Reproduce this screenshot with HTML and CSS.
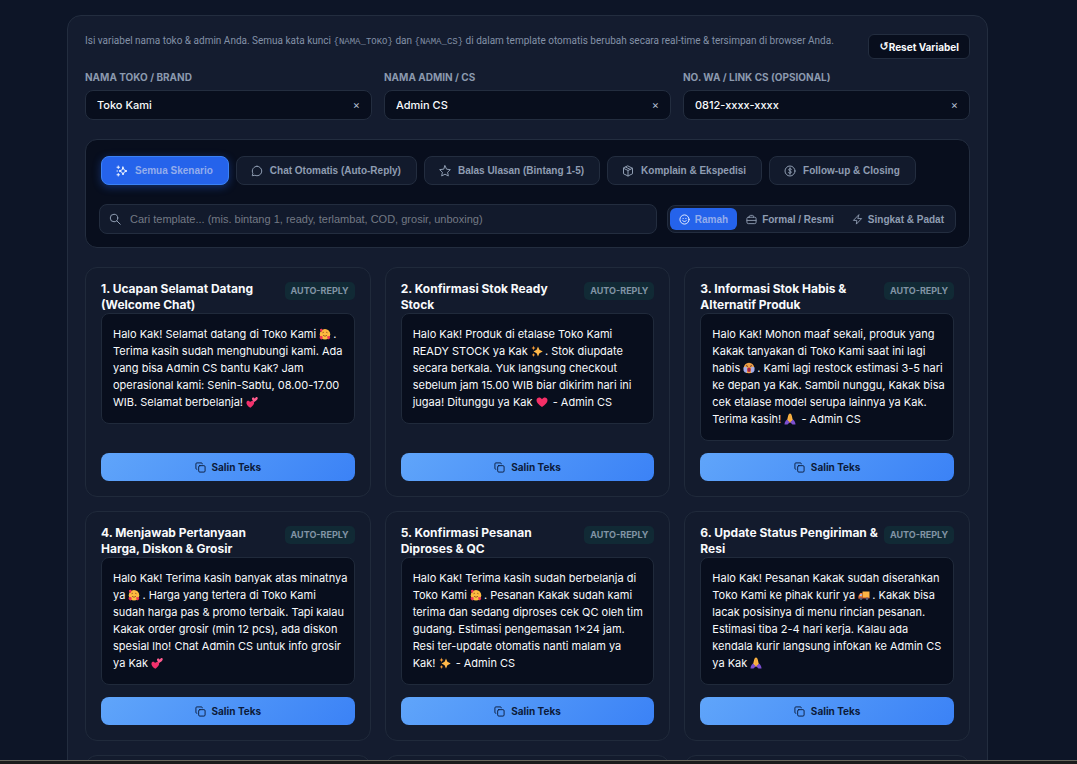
FILE: index.html
```html
<!DOCTYPE html>
<html lang="id">
<head>
<meta charset="utf-8">
<meta name="viewport" content="width=device-width, initial-scale=1">
<title>Template Chat Toko</title>
<link rel="stylesheet" href="styles.css">
</head>
<body>
<svg class="sprite" aria-hidden="true">
  <symbol id="i-spark" viewBox="0 0 24 24"><path d="M14 4l2.200 5.800L22 12l-5.800 2.200L14 20l-2.200-5.800L6 12l5.800-2.200z"/><path d="M4.500 2v5M2 4.500h5M4.500 17v5M2 19.500h5M2 12h1"/></symbol>
  <symbol id="i-chat" viewBox="0 0 24 24"><path d="M12 2.500a9.500 9.500 0 1 1-4.200 18L2.500 21.500l1.300-4.800A9.500 9.500 0 0 1 12 2.500z"/></symbol>
  <symbol id="i-star" viewBox="0 0 24 24"><path d="M12 1.500l3.200 6.900 7.500.9-5.500 5.200 1.400 7.500L12 18.300 5.400 22l1.400-7.500L1.300 9.300l7.500-.9z"/></symbol>
  <symbol id="i-box" viewBox="0 0 24 24"><path d="M12 2l9 4.500v11L12 22l-9-4.500v-11zM3 6.500l9 4.500 9-4.500M12 11v11M7.500 4.300l9 4.500"/></symbol>
  <symbol id="i-coin" viewBox="0 0 24 24"><circle cx="12" cy="12" r="10"/><path d="M15 8.500C14 7 9.500 6.800 9.500 9.500S14.500 11.500 14.500 14.300 10 17 9 15.500M12 5.500v13"/></symbol>
  <symbol id="i-search" viewBox="0 0 24 24"><circle cx="10" cy="10" r="7.500"/><path d="M15.500 15.500L22.500 22.500"/></symbol>
  <symbol id="i-smile" viewBox="0 0 24 24"><circle cx="12" cy="12" r="10"/><path d="M8 14.500c2 2.500 6 2.500 8 0M9 9.500v.5M15 9.500v.5"/></symbol>
  <symbol id="i-case" viewBox="0 0 24 24"><rect x="2" y="7" width="20" height="14" rx="3"/><path d="M7.500 7V5.500A2.500 2.500 0 0 1 10 3h4a2.500 2.500 0 0 1 2.500 2.500V7M2 14h20"/></symbol>
  <symbol id="i-bolt" viewBox="0 0 24 24"><path d="M14.500 2L3 14h7.500L9.500 22 21 10h-7.500z"/></symbol>
  <symbol id="i-copy" viewBox="0 0 24 24"><rect x="8" y="8" width="14" height="14" rx="2.500"/><path d="M4 16a2 2 0 0 1-2-2V4a2 2 0 0 1 2-2h10a2 2 0 0 1 2 2"/></symbol>
  <symbol id="e-love" viewBox="0 0 24 24"><circle cx="12" cy="12.500" r="10.500" fill="#fdbb3f"/><path d="M7 9.500q1.500-2 3 0M14 9.500q1.500-2 3 0M8 14.500q4 4 8 0" fill="none" stroke="#8a4a1e" stroke-width="1.600"/><path d="M5 8C1 6 1 1 4 2c2-2 5 2 1 6zM5.500 23C0 21 0 15 4 16.500c3-2 5 3 1.500 6.500zM19 23c-4-3-3-8 0-6.500 4-1 5 4 0 6.500z" fill="#ee3557"/></symbol>
  <symbol id="e-hearts" viewBox="0 0 24 24"><path d="M8.500 23.500C3 20 0 16 1 12 2.500 8.500 6.500 9 8 12c2-3 7-3 8 0 1.500 4-3 8.500-7.500 11.500z" fill="#f1306b"/><path d="M15.500 12.500C12 8 10.500 4 13.500 3c2-.8 3.500.5 4 2.500C19 2 23 1 23.500 4c.6 3.500-4 6-8 8.500z" fill="#ff5c8f"/></symbol>
  <symbol id="e-heart" viewBox="0 0 24 24"><path d="M12 22C5 17 1 13 1 8.500 1 2 9 1 12 6.500 15 1 23 2 23 8.500 23 13 19 17 12 22z" fill="#f52f67"/></symbol>
  <symbol id="e-shine" viewBox="0 0 24 24"><path d="M14 3l2.800 6.700L23.500 13l-6.700 3.300L14 23l-2.800-6.700L5 13l6.200-3.300z" fill="#ffb84a"/><path d="M5 1l1 3.500L9 6 6 7.300 5 11 4 7.300 1 6l3-1.500zM5 16l1 2.500L8.500 20 6 21.200 5 24l-1-2.800L1.500 20 4 18.500z" fill="#f69a35"/></symbol>
  <symbol id="e-cry" viewBox="0 0 24 24"><circle cx="12" cy="12" r="10.500" fill="#f0a044"/><path d="M1 11q4-3 7 0v11q-6-1-7-5zM23 11q-4-3-7 0v11q6-1 7-5z" fill="#a5aee8"/><path d="M6 7l4 2M18 7l-4 2" stroke="#6a3b3b" stroke-width="2"/><ellipse cx="12" cy="15.500" rx="3.500" ry="4.500" fill="#a51f4b"/></symbol>
  <symbol id="e-pray" viewBox="0 0 24 24"><path d="M12 1C8 1 8 10 6 14l6 6zM12 1c4 0 4 9 6 13l-6 6z" fill="#fdb544"/><path d="M12 3v15" stroke="#dd8a2d" stroke-width="1"/><path d="M6 13l5.500 5.500L7 23H1c0-5 2-7 5-10zM18 13l-5.500 5.500L17 23h6c0-5-2-7-5-10z" fill="#7c4fd0"/></symbol>
  <symbol id="e-truck" viewBox="0 0 24 24"><path d="M9 5h14v13H9z" fill="#fdb544"/><path d="M9 8H4.500L1 14v5h8z" fill="#ef7b35"/><path d="M5 10h2.500v4H3z" fill="#a9c9f5"/><path d="M1 17h22v2H1z" fill="#b94832"/><circle cx="6" cy="19.500" r="2.500" fill="#565f78"/><circle cx="18" cy="19.500" r="2.500" fill="#565f78"/></symbol>
</svg>

<main class="viewport">
  <div class="shell">
    <div class="intro">
      <p class="intro-text">Isi variabel nama toko &amp; admin Anda. Semua kata kunci <code>{NAMA_TOKO}</code> dan <code>{NAMA_CS}</code> di dalam template otomatis berubah secara real-time &amp; tersimpan di browser Anda.</p>
      <button class="reset" type="button"><span class="reset-icon">↺</span>Reset Variabel</button>
    </div>

    <div class="fields">
      <div class="field">
        <label for="toko">NAMA TOKO / BRAND</label>
        <div class="control"><input id="toko" type="text" value="Toko Kami"><button type="button" aria-label="Hapus nama toko">×</button></div>
      </div>
      <div class="field">
        <label for="admin">NAMA ADMIN / CS</label>
        <div class="control"><input id="admin" type="text" value="Admin CS"><button type="button" aria-label="Hapus nama admin">×</button></div>
      </div>
      <div class="field">
        <label for="wa">NO. WA / LINK CS (OPSIONAL)</label>
        <div class="control"><input id="wa" type="text" value="0812-xxxx-xxxx"><button type="button" aria-label="Hapus nomor">×</button></div>
      </div>
    </div>

    <section class="filters">
      <div class="chips">
        <button class="chip active" type="button"><svg class="icon"><use href="#i-spark"/></svg>Semua Skenario</button>
        <button class="chip" type="button"><svg class="icon"><use href="#i-chat"/></svg>Chat Otomatis (Auto-Reply)</button>
        <button class="chip" type="button"><svg class="icon"><use href="#i-star"/></svg>Balas Ulasan (Bintang 1-5)</button>
        <button class="chip" type="button"><svg class="icon"><use href="#i-box"/></svg>Komplain &amp; Ekspedisi</button>
        <button class="chip" type="button"><svg class="icon"><use href="#i-coin"/></svg>Follow-up &amp; Closing</button>
      </div>
      <div class="tools">
        <div class="search"><svg class="icon"><use href="#i-search"/></svg><input type="text" aria-label="Cari template" placeholder="Cari template... (mis. bintang 1, ready, terlambat, COD, grosir, unboxing)"></div>
        <div class="tones">
          <button class="tone active" type="button"><svg class="icon"><use href="#i-smile"/></svg>Ramah</button>
          <button class="tone" type="button"><svg class="icon"><use href="#i-case"/></svg>Formal / Resmi</button>
          <button class="tone" type="button"><svg class="icon"><use href="#i-bolt"/></svg>Singkat &amp; Padat</button>
        </div>
      </div>
    </section>

    <section class="cards">
      <article class="card">
        <header><h2>1. Ucapan Selamat Datang (Welcome Chat)</h2><span class="badge">AUTO-REPLY</span></header>
        <p class="message">Halo Kak! Selamat datang di Toko Kami <svg class="emoji"><use href="#e-love"/></svg>. Terima kasih sudah menghubungi kami. Ada yang bisa Admin CS bantu Kak? Jam operasional kami: Senin-Sabtu, 08.00-17.00 WIB. Selamat berbelanja! <svg class="emoji"><use href="#e-hearts"/></svg></p>
        <button class="copy" type="button"><svg class="icon"><use href="#i-copy"/></svg>Salin Teks</button>
      </article>
      <article class="card">
        <header><h2>2. Konfirmasi Stok Ready Stock</h2><span class="badge">AUTO-REPLY</span></header>
        <p class="message">Halo Kak! Produk di etalase Toko Kami READY STOCK ya Kak <svg class="emoji"><use href="#e-shine"/></svg>. Stok diupdate secara berkala. Yuk langsung checkout sebelum jam 15.00 WIB biar dikirim hari ini jugaa! Ditunggu ya Kak <svg class="emoji"><use href="#e-heart"/></svg> - Admin CS</p>
        <button class="copy" type="button"><svg class="icon"><use href="#i-copy"/></svg>Salin Teks</button>
      </article>
      <article class="card">
        <header><h2>3. Informasi Stok Habis &amp; Alternatif Produk</h2><span class="badge">AUTO-REPLY</span></header>
        <p class="message">Halo Kak! Mohon maaf sekali, produk yang Kakak tanyakan di Toko Kami saat ini lagi habis <svg class="emoji"><use href="#e-cry"/></svg>. Kami lagi restock estimasi 3-5 hari ke depan ya Kak. Sambil nunggu, Kakak bisa cek etalase model serupa lainnya ya Kak. Terima kasih! <svg class="emoji"><use href="#e-pray"/></svg> - Admin CS</p>
        <button class="copy" type="button"><svg class="icon"><use href="#i-copy"/></svg>Salin Teks</button>
      </article>
      <article class="card">
        <header><h2>4. Menjawab Pertanyaan Harga, Diskon &amp; Grosir</h2><span class="badge">AUTO-REPLY</span></header>
        <p class="message">Halo Kak! Terima kasih banyak atas minatnya ya <svg class="emoji"><use href="#e-love"/></svg>. Harga yang tertera di Toko Kami sudah harga pas &amp; promo terbaik. Tapi kalau Kakak order grosir (min 12 pcs), ada diskon spesial lho! Chat Admin CS untuk info grosir ya Kak <svg class="emoji"><use href="#e-hearts"/></svg></p>
        <button class="copy" type="button"><svg class="icon"><use href="#i-copy"/></svg>Salin Teks</button>
      </article>
      <article class="card">
        <header><h2>5. Konfirmasi Pesanan Diproses &amp; QC</h2><span class="badge">AUTO-REPLY</span></header>
        <p class="message">Halo Kak! Terima kasih sudah berbelanja di Toko Kami <svg class="emoji"><use href="#e-love"/></svg>. Pesanan Kakak sudah kami terima dan sedang diproses cek QC oleh tim gudang. Estimasi pengemasan 1x24 jam. Resi ter-update otomatis nanti malam ya <span class="together">Kak! <svg class="emoji"><use href="#e-shine"/></svg></span> - Admin CS</p>
        <button class="copy" type="button"><svg class="icon"><use href="#i-copy"/></svg>Salin Teks</button>
      </article>
      <article class="card">
        <header><h2>6. Update Status Pengiriman &amp; Resi</h2><span class="badge">AUTO-REPLY</span></header>
        <p class="message">Halo Kak! Pesanan Kakak sudah diserahkan Toko Kami ke pihak kurir ya <svg class="emoji"><use href="#e-truck"/></svg>. Kakak bisa lacak posisinya di menu rincian pesanan. Estimasi tiba 2-4 hari kerja. Kalau ada kendala kurir langsung infokan ke Admin CS ya Kak <svg class="emoji"><use href="#e-pray"/></svg></p>
        <button class="copy" type="button"><svg class="icon"><use href="#i-copy"/></svg>Salin Teks</button>
      </article>
      <article class="card upcoming"></article>
      <article class="card upcoming"></article>
      <article class="card upcoming"></article>
    </section>
  </div>
</main>
<footer class="edge"></footer>
</body>
</html>
```
FILE: styles.css
```css
* { box-sizing: border-box; }

body {
  margin: 0;
  height: 100vh;
  display: flex;
  flex-direction: column;
  overflow: hidden;
  background: #0d1527;
  color: #f8fafc;
  font-family: Inter, "Liberation Sans", sans-serif;
}

button, input { font-family: inherit; margin: 0; }
h2, p { margin: 0; }

.sprite { display: none; }

.icon {
  width: 12px;
  height: 12px;
  flex: none;
  fill: none;
  stroke: currentColor;
  stroke-width: 2;
  stroke-linecap: round;
  stroke-linejoin: round;
}

.viewport {
  flex: 1;
  min-height: 0;
  overflow: hidden;
  padding: 15px 89px 0 67px;
}

.edge {
  flex: none;
  height: 4px;
  background: #1b1b1c;
  border-top: 1px solid #69685f;
}

.shell {
  padding: 18px 17px;
  border: 1px solid #232d3f;
  border-radius: 14px;
  background: #141c2f;
}

.intro {
  display: flex;
  justify-content: space-between;
  align-items: flex-start;
  gap: 12px;
}

.intro-text {
  font-family: Roboto, sans-serif;
  font-size: 10px;
  line-height: 14px;
  color: #8391a7;
}

.intro-text code { font: 9px "Liberation Mono", monospace; }

.reset {
  display: flex;
  align-items: center;
  flex: none;
  height: 25px;
  padding: 0 10px;
  border: 1px solid #232d3f;
  border-radius: 6px;
  background: #080e1d;
  color: #f8fafc;
  font-size: 10px;
  font-weight: 700;
}

.reset-icon { font-family: "DejaVu Sans", sans-serif; font-size: 11px; }

.fields {
  display: grid;
  grid-template-columns: repeat(3, 1fr);
  gap: 12px;
  margin-top: 11px;
}

.field {
  display: flex;
  flex-direction: column;
  gap: 6px;
}

.field label {
  font-size: 10px;
  line-height: 14px;
  font-weight: 700;
  color: #8b99ae;
}

.control {
  display: flex;
  align-items: center;
  height: 30px;
  padding: 0 11px;
  border: 1px solid #232d3f;
  border-radius: 8px;
  background: #080e1d;
}

.control input {
  flex: 1;
  min-width: 0;
  padding: 0;
  border: 0;
  outline: 0;
  background: none;
  color: #f8fafc;
  font-size: 11px;
  font-weight: 500;
}

.control button {
  padding: 0;
  border: 0;
  background: none;
  color: #b4bfce;
  font-size: 11px;
  line-height: 14px;
}

.filters {
  display: flex;
  flex-direction: column;
  gap: 16px;
  margin: 19px 0;
  padding: 13px;
  border: 1px solid #232d3f;
  border-radius: 12px;
  background: #080e1d;
}

.chips {
  display: flex;
  gap: 7px;
  padding: 3px 2px;
}

.chip {
  display: flex;
  align-items: center;
  gap: 7px;
  height: 29px;
  padding: 0 15px 0 14px;
  border: 1px solid #232d3f;
  border-radius: 8px;
  background: #121a2c;
  color: #8f9db2;
  font-family: "Liberation Sans", sans-serif;
  font-size: 10px;
  font-weight: 700;
  white-space: nowrap;
}

.chip.active {
  border-color: #3b82f6;
  background: #2563eb;
  color: #94adec;
  box-shadow: 0 2px 8px rgba(37, 99, 235, 0.4);
}

.active .icon { color: #f1f5ff; }

.tools {
  display: flex;
  align-items: center;
  gap: 10px;
}

.search {
  display: flex;
  align-items: center;
  flex: 1;
  gap: 9px;
  height: 30px;
  padding: 0 9px;
  border: 1px solid #232d3f;
  border-radius: 8px;
  background: #121a2c;
  color: #8f9db2;
}

.search input {
  flex: 1;
  min-width: 0;
  padding: 0;
  border: 0;
  outline: 0;
  background: none;
  color: #f8fafc;
  font-family: "Liberation Sans", sans-serif;
  font-size: 11px;
}

.search input::placeholder { color: #727984; opacity: 1; }

.tones {
  display: flex;
  height: 28px;
  padding: 2px;
  border: 1px solid #232d3f;
  border-radius: 8px;
  background: #121a2c;
}

.tone {
  display: flex;
  align-items: center;
  gap: 5px;
  padding: 0 9px;
  border: 0;
  border-radius: 6px;
  background: none;
  color: #8f9db2;
  font-family: "Liberation Sans", sans-serif;
  font-size: 10px;
  font-weight: 700;
  white-space: nowrap;
}

.tone.active { background: #2563eb; color: #94adec; }

.tone .icon, .copy .icon { width: 11px; height: 11px; }

.cards {
  display: grid;
  grid-template-columns: repeat(3, 1fr);
  gap: 14px;
}

.card {
  display: flex;
  flex-direction: column;
  padding: 13px 15px 15px;
  border: 1px solid #202a3b;
  border-radius: 12px;
  background: #131b2d;
}

.card header {
  display: flex;
  justify-content: space-between;
  align-items: flex-start;
  gap: 4px;
}

.card h2 {
  font-size: 12px;
  line-height: 16px;
  font-weight: 700;
}

.badge {
  flex: none;
  margin-top: 1px;
  padding: 0 6px;
  border-radius: 5px;
  background: #112a35;
  color: #8294a5;
  font-size: 9px;
  line-height: 18px;
  font-weight: 700;
}

.message {
  margin-bottom: 12px;
  padding: 12px 5px 12px 11px;
  border: 1px solid #202a3b;
  border-radius: 8px;
  background: #080e1d;
  font-size: 11px;
  line-height: 17px;
}

.emoji {
  width: 12px;
  height: 12px;
  margin: 0 2px 0 0;
  vertical-align: -2px;
}

.together { white-space: nowrap; }

.copy {
  display: flex;
  flex: none;
  align-items: center;
  justify-content: center;
  gap: 6px;
  height: 28px;
  margin-top: auto;
  border: 0;
  border-radius: 8px;
  background: linear-gradient(135deg, #60a5fa, #3b82f6);
  color: #0c1b3a;
  font-size: 10px;
  font-weight: 700;
}

.upcoming { min-height: 230px; }
```
